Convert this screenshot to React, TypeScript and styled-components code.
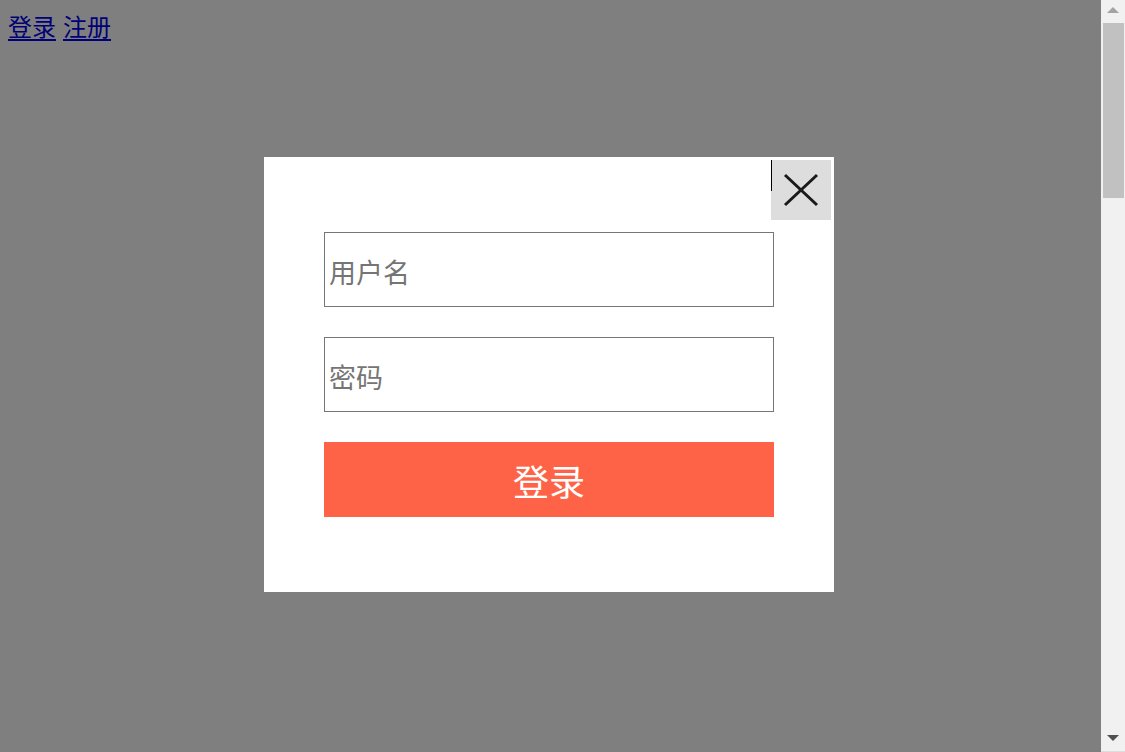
import React from "react";
import styled, { createGlobalStyle } from "styled-components";

const GlobalStyle = createGlobalStyle`
  html, body {
    margin: 0;
    padding: 0;
  }
  html {
    scrollbar-width: none;
  }
  html::-webkit-scrollbar {
    display: none;
  }
  body {
    margin: 8px;
    background: #ffffff;
    font-family: "Noto Sans CJK SC", "Noto Sans", sans-serif;
  }
`;

const Page = styled.div`
  height: 4460px;
`;

const TopNav = styled.nav`
  display: flex;
  gap: 7px;
  font-size: 24px;
  line-height: 35px;
`;

const NavLink = styled.a`
  color: #0000ee;
  text-decoration: underline;
  text-underline-offset: 3px;
  font-family: "Noto Sans CJK SC", sans-serif;
`;

const Mask = styled.div`
  position: fixed;
  top: 0;
  left: 0;
  bottom: 0;
  right: 24px;
  background: rgba(0, 0, 0, 0.5);
`;

const Modal = styled.div`
  position: fixed;
  left: 264px;
  top: 157px;
  width: 570px;
  box-sizing: border-box;
  padding: 75px 60px;
  background: #ffffff;
  display: flex;
  flex-direction: column;
  gap: 30px;
`;

const CloseButton = styled.button`
  position: absolute;
  top: 3px;
  right: 3px;
  width: 60px;
  height: 60px;
  padding: 0;
  border: none;
  background: #dddddd;
  display: flex;
  align-items: center;
  justify-content: center;
  cursor: pointer;

  &::before {
    content: "";
    position: absolute;
    left: 0;
    top: 0;
    width: 1px;
    height: 31px;
    background: #000000;
  }
`;

const Field = styled.input`
  display: block;
  width: 450px;
  height: 75px;
  box-sizing: border-box;
  margin: 0;
  padding: 4px 4px 0;
  border: 1px solid #767676;
  font-family: "Noto Sans CJK SC", sans-serif;
  font-size: 27px;
  color: #333;
  outline: none;
  &::placeholder {
    color: #757575;
  }
`;

const SubmitButton = styled.button`
  width: 450px;
  height: 75px;
  border: none;
  margin: 0;
  padding: 0;
  background: #ff6347;
  color: #ffffff;
  font-family: "Noto Sans CJK SC", sans-serif;
  font-size: 36px;
  cursor: pointer;
`;

const ScrollTrack = styled.div`
  position: fixed;
  top: 0;
  right: 0;
  bottom: 0;
  width: 24px;
  background: #f1f1f1;
  border-bottom: 1px solid #dcdcdc;
  box-sizing: border-box;
  display: flex;
  flex-direction: column;
  align-items: center;
`;

const Arrow = styled.div<{ $dir: "up" | "down" }>`
  width: 0;
  height: 0;
  border-left: 6px solid transparent;
  border-right: 6px solid transparent;
  ${(p) =>
    p.$dir === "up"
      ? `border-bottom: 6px solid #a3a3a3; margin-top: 7px;`
      : `border-top: 6px solid #505050; margin-top: auto; margin-bottom: 10px;`}
`;

const Thumb = styled.div`
  margin-top: 10px;
  width: 21px;
  margin-left: 1px;
  height: 175px;
  background: #c1c1c1;
`;

export default function App() {
  return (
    <>
      <GlobalStyle />
      <Page>
        <TopNav>
          <NavLink href="#">登录</NavLink>
          <NavLink href="#">注册</NavLink>
        </TopNav>
      </Page>
      <Mask />
      <Modal>
        <CloseButton aria-label="关闭">
          <svg width="36" height="34" viewBox="0 0 36 34">
            <path
              d="M2 2 L34 32 M34 2 L2 32"
              stroke="#1a1a1a"
              strokeWidth="3"
              fill="none"
            />
          </svg>
        </CloseButton>
        <Field placeholder="用户名" />
        <Field placeholder="密码" type="password" />
        <SubmitButton>登录</SubmitButton>
      </Modal>
      <ScrollTrack>
        <Arrow $dir="up" />
        <Thumb />
        <Arrow $dir="down" />
      </ScrollTrack>
    </>
  );
}
